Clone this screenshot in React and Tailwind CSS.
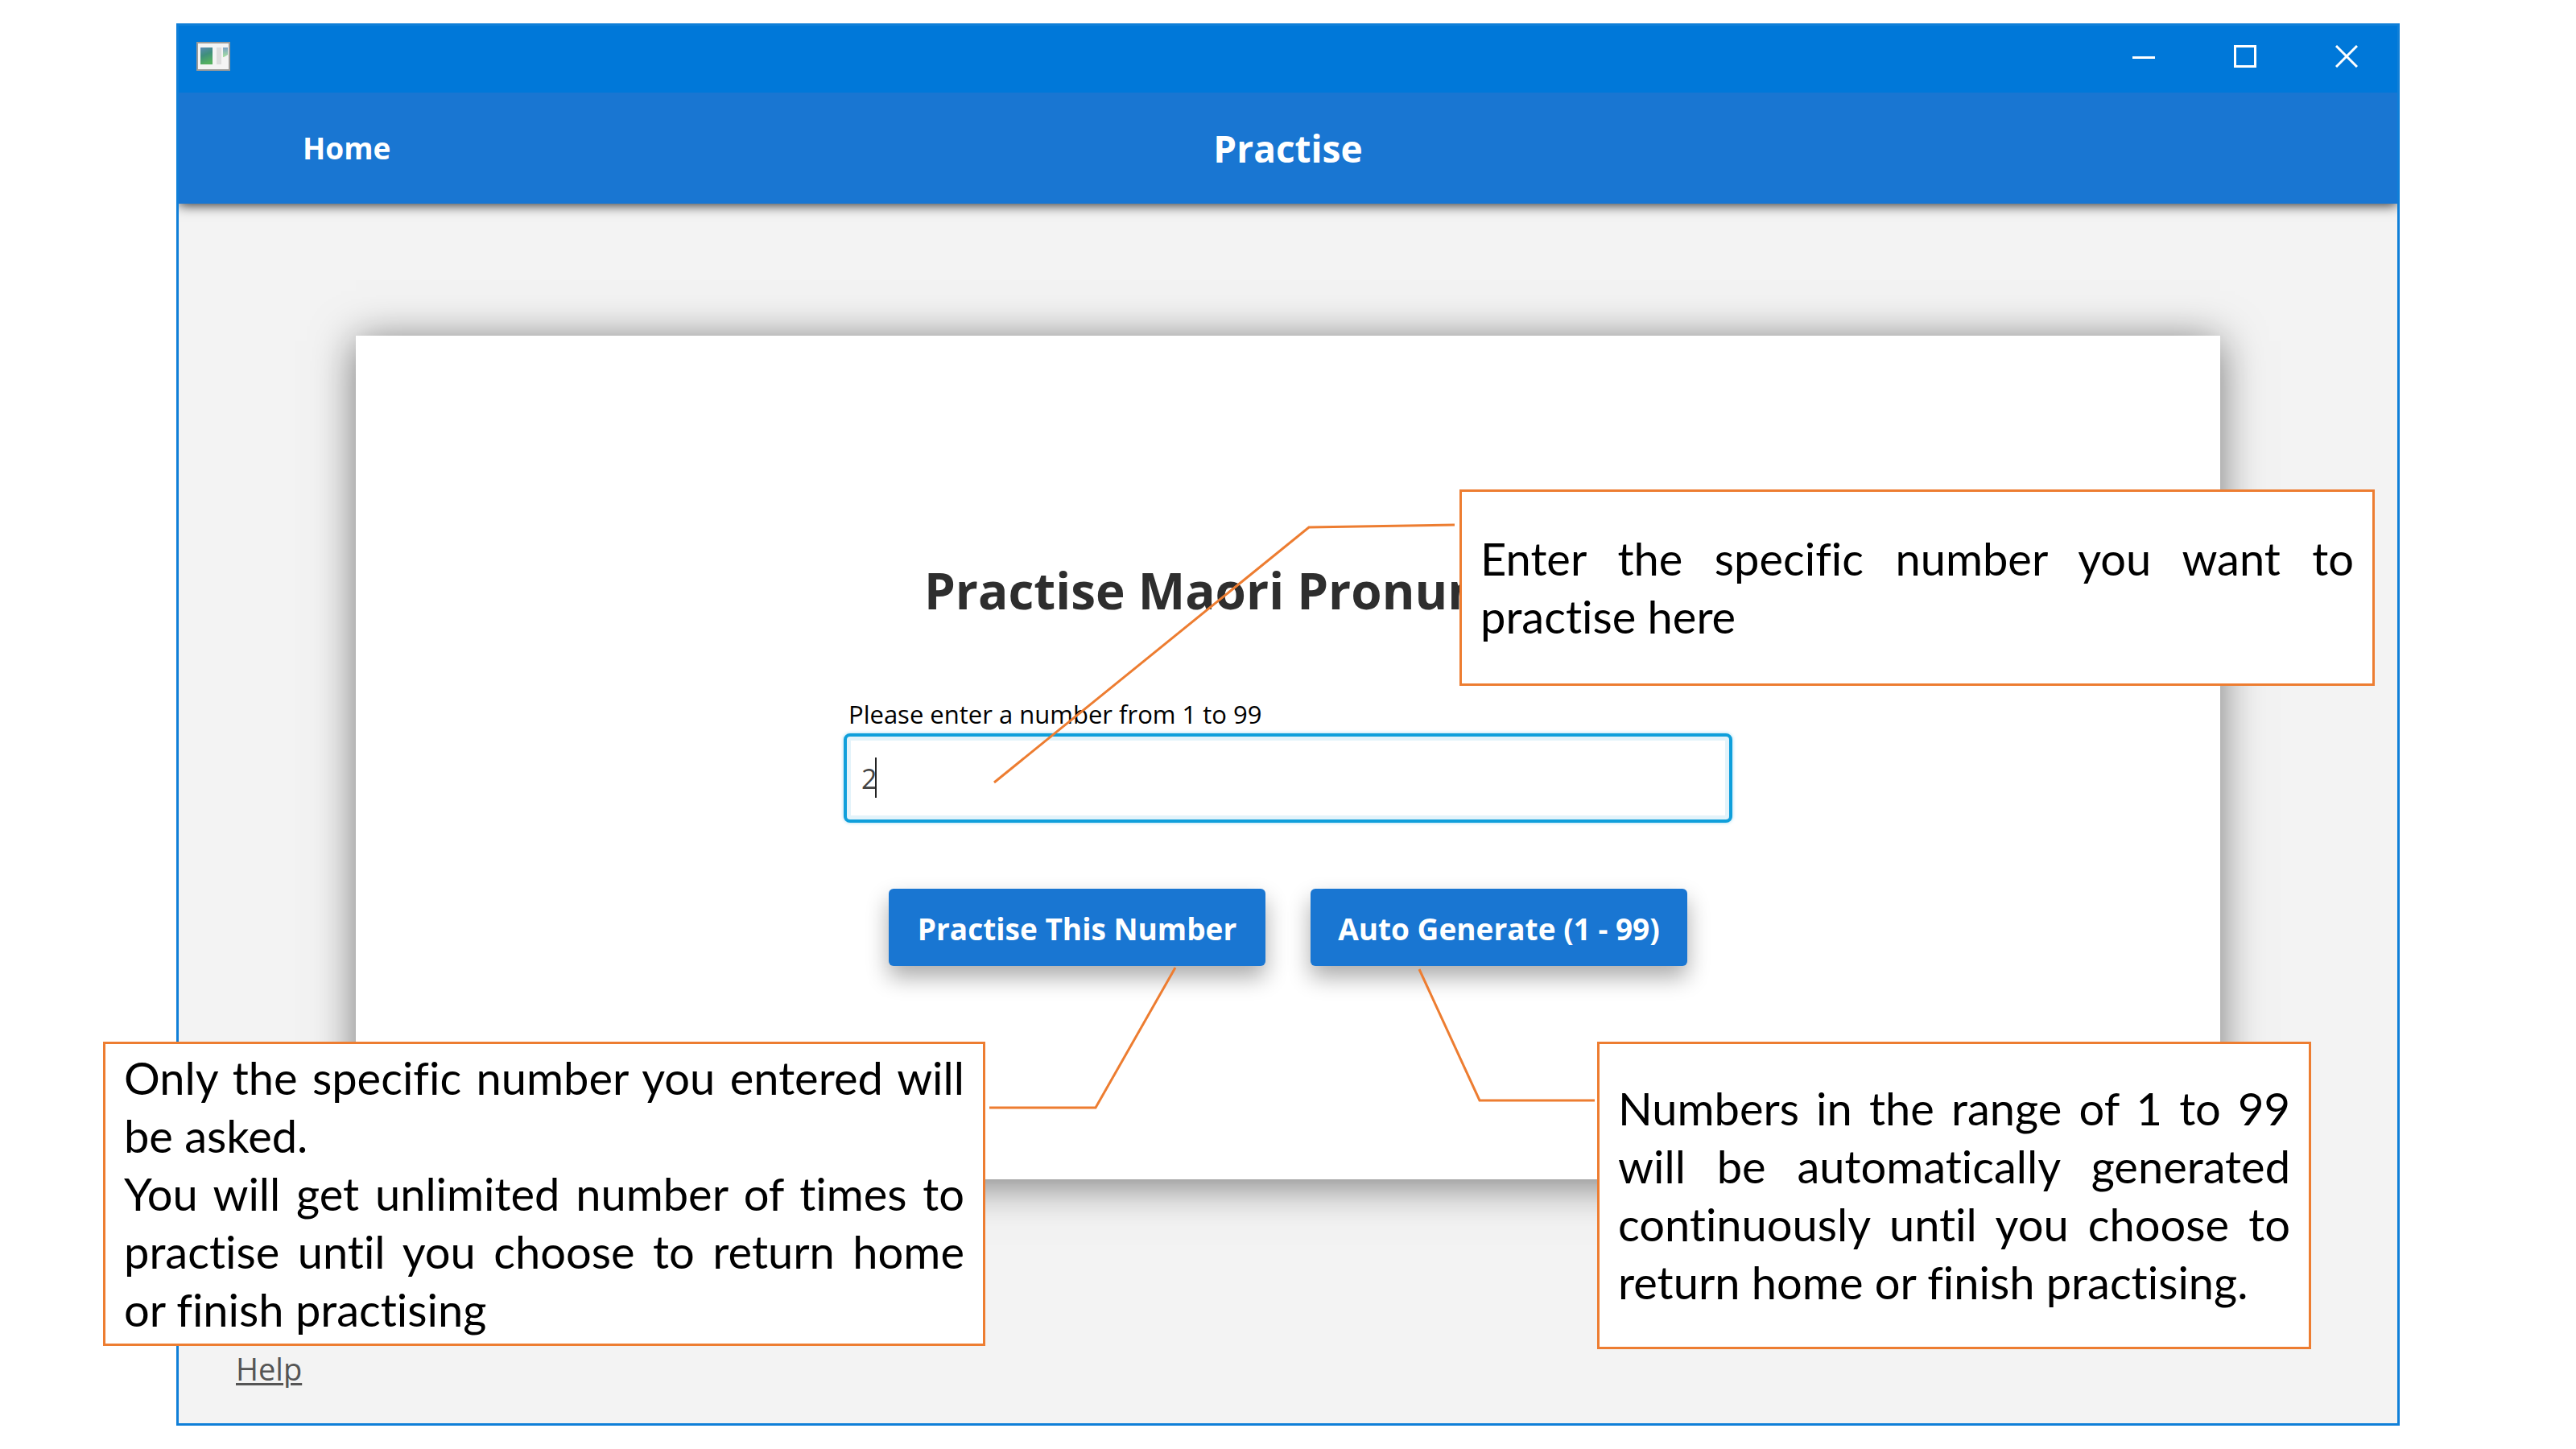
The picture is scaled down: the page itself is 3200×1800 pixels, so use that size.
function AppIcon() {
  return (
    <svg width="42" height="36" viewBox="0 0 42 36" aria-hidden="true">
      <defs>
        <linearGradient id="pane" x1="0" y1="0" x2="0.3" y2="1">
          <stop offset="0" stopColor="#5b8bb5" />
          <stop offset="0.5" stopColor="#3f8f7c" />
          <stop offset="1" stopColor="#55b060" />
        </linearGradient>
        <linearGradient id="sliver" x1="0" y1="0" x2="0" y2="1">
          <stop offset="0" stopColor="#7fa3c6" />
          <stop offset="1" stopColor="#a5e0a0" />
        </linearGradient>
      </defs>
      <rect x="1" y="1" width="40" height="34" fill="#f4f4f4" stroke="#9a9a98" strokeWidth="2" />
      <rect x="5" y="7" width="15" height="21" fill="url(#pane)" />
      <rect x="25" y="7" width="6" height="21" fill="#dedede" />
      <path d="M33 7h6v9l-5 3h-1z" fill="url(#sliver)" />
    </svg>
  );
}

function WindowControls() {
  return (
    <div className="flex items-center gap-[66px] pr-[33px]">
      <button type="button" aria-label="Minimize" className="flex h-12 w-[60px] items-center justify-center">
        <svg width="28" height="28" viewBox="0 0 28 28">
          <path d="M0 15.500h28" stroke="white" strokeWidth="3" />
        </svg>
      </button>
      <button type="button" aria-label="Maximize" className="flex h-12 w-[60px] items-center justify-center">
        <svg width="28" height="28" viewBox="0 0 28 28">
          <rect x="1.500" y="1.500" width="25" height="25" fill="none" stroke="white" strokeWidth="3" />
        </svg>
      </button>
      <button type="button" aria-label="Close" className="flex h-12 w-[60px] items-center justify-center">
        <svg width="28" height="28" viewBox="0 0 28 28">
          <path d="M1 1l26 26M27 1L1 27" stroke="white" strokeWidth="3" />
        </svg>
      </button>
    </div>
  );
}

function ActionButton({ children }) {
  return (
    <button
      type="button"
      className="h-24 w-[468px] rounded-[6px] bg-[#1976d2] pt-[3px] text-[37px] leading-[48px] font-bold whitespace-nowrap text-white shadow-[0_14px_28px_rgba(0,0,0,0.33)]"
    >
      {children}
    </button>
  );
}

function Callout({ className, children }) {
  return (
    <aside
      className={
        "absolute flex flex-col justify-center border-[3px] border-[#ed7d31] bg-white px-[23px] text-justify font-['Lato',sans-serif] text-[56px] leading-[72px] text-black [font-variant-ligatures:none] " +
        className
      }
    >
      {children}
    </aside>
  );
}

export default function App() {
  return (
    <div className="relative flex min-h-screen bg-white px-[219px] py-[29px] font-['Open_Sans','Noto_Sans',sans-serif]">
      <div className="flex w-full flex-col border-[3px] border-[#0f7fd8] bg-[#f3f3f3]">
        <div className="flex h-[83px] items-center justify-between bg-[#0078d9] pb-[7px] pl-[22px]">
          <AppIcon />
          <WindowControls />
        </div>
        <header className="grid h-[138px] grid-cols-3 items-center bg-[#1976d2] text-white shadow-[0_2px_14px_rgba(0,0,0,0.8)] [clip-path:inset(0_0_-24px_0)]">
          <a href="#home" className="justify-self-start pl-[154px] text-[37px] leading-[48px] font-bold">
            Home
          </a>
          <h1 className="text-center text-[46px] leading-[64px] font-bold">Practise</h1>
        </header>

        <main className="flex grow flex-col px-[220px] pt-[164px]">
          <section className="flex flex-col items-center bg-white pt-[276px] pb-[265px] shadow-[0_6px_50px_rgba(0,0,0,0.52)]">
            <h2 className="text-center text-[62px] leading-[80px] font-bold text-[#2e2e2e]">
              Practise Maori Pronunciation
            </h2>
            <form className="mt-[92px] flex w-[1104px] flex-col" onSubmit={(e) => e.preventDefault()}>
              <label htmlFor="number" className="pb-[2px] pl-[6px] text-[31px] leading-[44px] text-black">
                Please enter a number from 1 to 99
              </label>
              <div className="relative">
                <input
                  id="number"
                  type="text"
                  defaultValue="2"
                  className="h-[111px] w-full rounded-[8px] border-4 border-[#0f9fdb] bg-white px-[18px] text-[34px] text-[#444] caret-transparent shadow-[inset_0_0_0_5px_#e3f3fa,0_0_4px_#9ed8f0] outline-none"
                />
                <span className="absolute top-[30px] left-[39px] h-[50px] w-[2px] bg-[#222]" />
              </div>
              <div className="mt-[82px] flex justify-center gap-14">
                <ActionButton>Practise This Number</ActionButton>
                <ActionButton>Auto Generate (1 - 99)</ActionButton>
              </div>
            </form>
          </section>
        </main>
        <footer className="px-[71px] pb-[42px]">
          <a href="#help" className="text-[38px] leading-[52px] text-[#555] underline decoration-[3px] underline-offset-[3px]">
            Help
          </a>
        </footer>
      </div>

      <svg
        className="pointer-events-none absolute top-0 left-0"
        width="3200"
        height="1800"
        viewBox="0 0 3200 1800"
        fill="none"
        stroke="#ed7d31"
        strokeWidth="3"
        aria-hidden="true"
      >
        <path d="M1235 972L1626 655L1807 652" />
        <path d="M1460 1202L1361 1376H1229" />
        <path d="M1763 1204L1838 1367H1981" />
      </svg>

      <Callout className="top-[608px] left-[1813px] h-[244px] w-[1137px]">
        <p>Enter the specific number you want to practise here</p>
      </Callout>
      <Callout className="top-[1294px] left-[128px] h-[378px] w-[1096px]">
        <p>Only the specific number you entered will be asked.</p>
        <p>
          You will get unlimited number of times to practise until you choose to return home{" "}
          <span className="whitespace-nowrap">or finish</span> practising
        </p>
      </Callout>
      <Callout className="top-[1294px] left-[1984px] h-[382px] w-[887px]">
        <p>
          Numbers in the range of 1 to 99 will be automatically generated continuously until you choose to return home or
          finish practising.
        </p>
      </Callout>
    </div>
  );
}
